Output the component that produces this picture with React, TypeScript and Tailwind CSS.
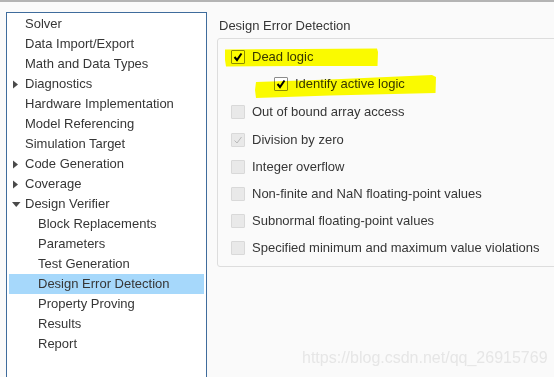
import React from 'react';

type TreeItem = { label: string; level: 0 | 1; toggle?: 'closed' | 'open'; selected?: boolean };

const tree: TreeItem[] = [
  { label: 'Solver', level: 0 },
  { label: 'Data Import/Export', level: 0 },
  { label: 'Math and Data Types', level: 0 },
  { label: 'Diagnostics', level: 0, toggle: 'closed' },
  { label: 'Hardware Implementation', level: 0 },
  { label: 'Model Referencing', level: 0 },
  { label: 'Simulation Target', level: 0 },
  { label: 'Code Generation', level: 0, toggle: 'closed' },
  { label: 'Coverage', level: 0, toggle: 'closed' },
  { label: 'Design Verifier', level: 0, toggle: 'open' },
  { label: 'Block Replacements', level: 1 },
  { label: 'Parameters', level: 1 },
  { label: 'Test Generation', level: 1 },
  { label: 'Design Error Detection', level: 1, selected: true },
  { label: 'Property Proving', level: 1 },
  { label: 'Results', level: 1 },
  { label: 'Report', level: 1 },
];

type Check = { label: string; checked: boolean; disabled: boolean; indent?: boolean; h: string };

const checks: Check[] = [
  { label: 'Dead logic', checked: true, disabled: false, h: 'h-[27px]' },
  { label: 'Identify active logic', checked: true, disabled: false, indent: true, h: 'h-[28px]' },
  { label: 'Out of bound array access', checked: false, disabled: true, h: 'h-[28px]' },
  { label: 'Division by zero', checked: true, disabled: true, h: 'h-[27px]' },
  { label: 'Integer overflow', checked: false, disabled: true, h: 'h-[27px]' },
  { label: 'Non-finite and NaN floating-point values', checked: false, disabled: true, h: 'h-[27px]' },
  { label: 'Subnormal floating-point values', checked: false, disabled: true, h: 'h-[27px]' },
  { label: 'Specified minimum and maximum value violations', checked: false, disabled: true, h: 'h-[27px]' },
];

function Toggle({ kind }: { kind?: 'closed' | 'open' }) {
  if (kind === 'closed')
    return (
      <svg width="9" height="9" viewBox="0 0 9 9" className="ml-[4px] mt-[1px]">
        <path d="M0 0.5 L5 4.5 L0 8.5 Z" fill="#4a4a4a" />
      </svg>
    );
  if (kind === 'open')
    return (
      <svg width="9" height="9" viewBox="0 0 9 9" className="ml-[3px] mt-[2px]">
        <path d="M0 1 L8.5 1 L4.25 6 Z" fill="#4a4a4a" />
      </svg>
    );
  return null;
}

function CheckBox({ checked, disabled }: { checked: boolean; disabled: boolean }) {
  return (
    <span
      className={
        disabled
          ? 'flex h-[14px] w-[14px] shrink-0 items-center justify-center rounded-[1px] border border-[#d9d9d9] bg-[#e9e9e9]'
          : 'flex h-[14px] w-[14px] shrink-0 items-center justify-center rounded-[1px] border border-[#8c8c8c] bg-white'
      }
    >
      {checked && (
        <svg width="12" height="12" viewBox="0 0 12 12">
          {disabled ? (
            <path d="M2.5 6.5 L5 9 L9.5 3" fill="none" stroke="#b8b8b8" strokeWidth="1" />
          ) : (
            <path d="M2.5 6 L5 9 L9.5 2.5" fill="none" stroke="#000" strokeWidth="2" />
          )}
        </svg>
      )}
    </span>
  );
}

export default function App() {
  return (
    <div
      className="relative h-[377px] w-[554px] overflow-hidden border-t-2 border-[#b4b4b4] bg-[#fafafa] text-[13px] text-[#363636]"
      style={{ fontFamily: '"Liberation Sans", Arial, sans-serif' }}
    >
      <div className="flex h-full items-start">
        {/* settings tree */}
        <div className="ml-[6px] mt-[10px] h-[380px] w-[201px] shrink-0 border border-[#3f6c9c] bg-white px-[2px] pt-[1px]">
          {tree.map((t) => (
            <div
              key={t.label}
              className={`flex h-5 items-center leading-5 ${t.selected ? 'bg-[#a6d8fb]' : ''}`}
            >
              <span className={`flex shrink-0 items-center ${t.level === 0 ? 'w-[16px]' : 'w-[29px]'}`}>
                <Toggle kind={t.toggle} />
              </span>
              <span className="whitespace-nowrap">{t.label}</span>
            </div>
          ))}
        </div>

        {/* right pane */}
        <div className="ml-[10px] w-[360px] shrink-0 pt-[16px]">
          <div className="h-4 pl-[2px] leading-4">Design Error Detection</div>
          <div className="mt-[4px] rounded-[3px] border border-[#dddddd] pb-[5px] pt-[4px]">
            {checks.map((c) => (
              <div
                key={c.label}
                className={`flex items-center gap-[7px] whitespace-nowrap ${c.h} ${c.indent ? 'pl-[56px]' : 'pl-[13px]'}`}
              >
                <CheckBox checked={c.checked} disabled={c.disabled} />
                <span>{c.label}</span>
              </div>
            ))}
          </div>
        </div>
      </div>

      {/* highlighter marks */}
      <svg
        width="554"
        height="377"
        viewBox="0 0 554 377"
        className="pointer-events-none absolute left-0 top-[-2px] mix-blend-multiply"
      >
        <path d="M225 49.5 L300 49 L377 48.5 L378 52 L377.5 66 L300 66 L226 66.5 L225 60 Z" fill="#ffff00" />
        <path d="M256 82 L330 79.5 L432 75 L436 77 L435.5 93 L330 95.5 L256 98 L255 90 Z" fill="#ffff00" />
      </svg>

      {/* watermark */}
      <div className="absolute left-[302px] top-[346px] text-[16px] leading-5 text-[#e6e6e6]">
        https://blog.csdn.net/qq_26915769
      </div>
    </div>
  );
}
